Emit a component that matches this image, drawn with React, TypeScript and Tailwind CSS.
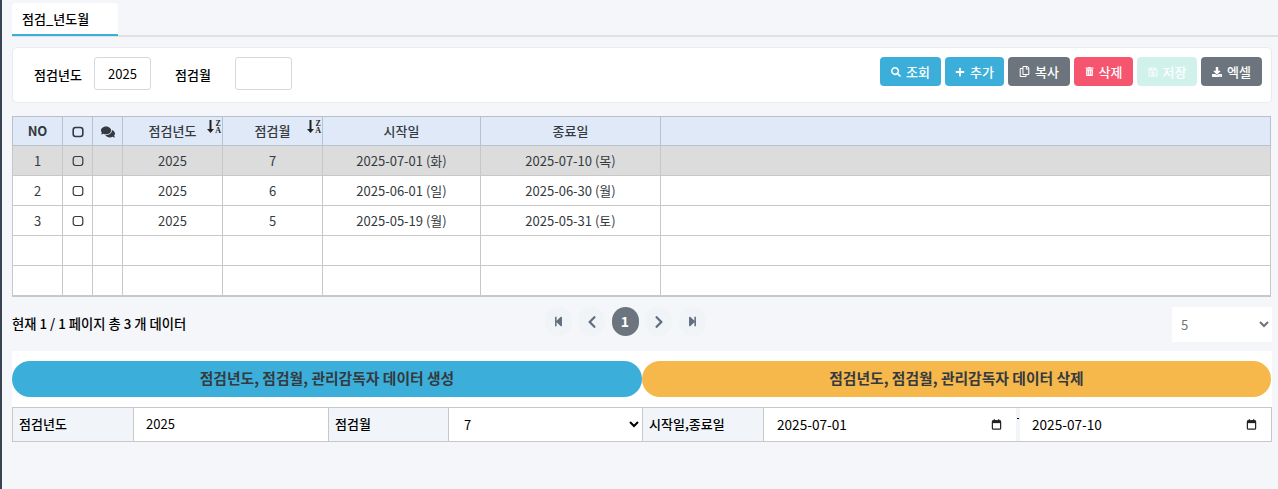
import type { ReactNode } from 'react'
import {
  FaChevronLeft,
  FaChevronRight,
  FaComments,
  FaDownload,
  FaPlus,
  FaRegCopy,
  FaRegSave,
  FaSearch,
  FaStepBackward,
  FaStepForward,
  FaTrashAlt,
} from 'react-icons/fa'

const font = 'font-["Noto_Sans_CJK_KR",_"Noto_Sans",_sans-serif]'

const rows = [
  { no: 1, year: '2025', month: '7', start: '2025-07-01 (화)', end: '2025-07-10 (목)', selected: true },
  { no: 2, year: '2025', month: '6', start: '2025-06-01 (일)', end: '2025-06-30 (월)' },
  { no: 3, year: '2025', month: '5', start: '2025-05-19 (월)', end: '2025-05-31 (토)' },
]

function CheckBox({ thick }: { thick?: boolean }) {
  return (
    <svg viewBox="0 0 12 12" className="inline w-[12px] h-[12px] mb-[2px]" fill="none" stroke="currentColor" strokeWidth={thick ? 1.6 : 1.2}>
      <rect x="1.2" y="1.5" width="9.6" height="9" rx="2.4" />
    </svg>
  )
}

function CalendarIcon() {
  return (
    <svg viewBox="0 0 12 13" className="w-[11px] h-[13px] text-[#222]" fill="none">
      <rect x="1.5" y="2.5" width="9" height="9" rx="1" stroke="currentColor" strokeWidth="1.3" />
      <rect x="1.5" y="2" width="9" height="3" fill="currentColor" />
      <rect x="3" y="0.8" width="1.4" height="2" fill="currentColor" />
      <rect x="7.6" y="0.8" width="1.4" height="2" fill="currentColor" />
    </svg>
  )
}

function SortMark() {
  return (
    <span className="absolute right-[1px] top-[3px] flex items-start gap-[1px] text-[#222]">
      <svg viewBox="0 0 7 13" className="w-[7px] h-[13px]" fill="currentColor">
        <path d="M2.5 0h2v9h2.5L3.5 13 0 9h2.5z" />
      </svg>
      <span className='flex flex-col font-["Liberation_Serif",_serif] text-[8px] leading-[7px] font-bold'>
        <span>Z</span>
        <span>A</span>
      </span>
    </span>
  )
}

function ToolButton({ icon, label, className }: { icon: ReactNode; label: string; className: string }) {
  return (
    <button className={`h-[29px] rounded-[4px] flex items-center justify-center gap-[5px] text-[13px] font-medium text-white ${className}`}>
      <span className="text-[10px]">{icon}</span>
      {label}
    </button>
  )
}

function HeadCell({ children, sort }: { children?: ReactNode; sort?: boolean }) {
  return (
    <th className="relative h-[29px] border border-[#b8c2cc] bg-[#e0e9f7] p-0 text-[13px] font-medium text-[#343a40]">
      {children}
      {sort && <SortMark />}
    </th>
  )
}

function BodyCell({ children }: { children?: ReactNode }) {
  return <td className="h-[30px] border border-[#c8c8c8] p-0 text-center text-[13px] text-[#343a40]">{children}</td>
}

function PageButton({ children, active }: { children: ReactNode; active?: boolean }) {
  return (
    <span
      className={`w-[27px] h-[29px] rounded-full flex items-center justify-center text-[14px] ${
        active ? 'bg-[#6c757d] text-white font-bold' : 'bg-[#f1f4f7] text-[#5f6f80]'
      }`}
    >
      {children}
    </span>
  )
}

function Label({ children, className }: { children: ReactNode; className: string }) {
  return <div className={`bg-[#f1f4f8] flex items-center pl-[6px] text-[13px] font-medium text-black ${className}`}>{children}</div>
}

function DateField({ value, className }: { value: string; className: string }) {
  return (
    <div className={`flex items-center justify-between pr-[14px] text-[13.6px] ${className}`}>
      {value}
      <CalendarIcon />
    </div>
  )
}

export default function App() {
  return (
    <div className={`${font} min-h-[489px] bg-[#f4f6f9] border-l-2 border-[#3a4553] pl-[10px] pr-[6px] pt-[3px] text-black`}>
      {/* Tabs */}
      <div className="mr-[-6px] border-b-2 border-[#dee2e6] h-[34px]">
        <div className="w-[106px] h-[33px] bg-white rounded-t-[4px] border-b-2 border-[#3bafda] pl-[10px] flex items-center text-[13px] font-medium">
          점검_년도월
        </div>
      </div>

      {/* Search */}
      <div className="mt-[10px] h-[56px] bg-white border border-[#e9ecef] rounded-[5px] flex items-start pt-[9px] pl-[21px] pr-[9px]">
        <span className="mt-[8px] w-[60px] text-[13px] font-medium">점검년도</span>
        <input readOnly value="2025" className="w-[57px] h-[33px] border border-[#d5d9de] rounded-[3px] text-center text-[13px] outline-none" />
        <span className="mt-[8px] ml-[24px] w-[60px] text-[13px] font-medium">점검월</span>
        <input readOnly value="" className="w-[57px] h-[33px] border border-[#d5d9de] rounded-[3px] text-center text-[13px] outline-none" />
        <div className="ml-auto flex gap-[4px]">
          <ToolButton icon={<FaSearch />} label="조회" className="w-[61px] bg-[#3bafda]" />
          <ToolButton icon={<FaPlus />} label="추가" className="w-[59px] bg-[#3bafda]" />
          <ToolButton icon={<FaRegCopy className="text-[11px]" />} label="복사" className="w-[62px] bg-[#6c757d]" />
          <ToolButton icon={<FaTrashAlt className="text-[9px]" />} label="삭제" className="w-[59px] bg-[#f5556f]" />
          <ToolButton icon={<FaRegSave />} label="저장" className="w-[60px] bg-[#d1f2eb]" />
          <ToolButton icon={<FaDownload />} label="엑셀" className="w-[61px] bg-[#6c757d]" />
        </div>
      </div>

      {/* Grid */}
      <table className="mt-[13px] w-[1259px] table-fixed border-collapse bg-white border-b-2 border-[#c8c8c8]">
        <colgroup>
          <col className="w-[50px]" />
          <col className="w-[30px]" />
          <col className="w-[30px]" />
          <col className="w-[100px]" />
          <col className="w-[100px]" />
          <col className="w-[158px]" />
          <col className="w-[180px]" />
          <col />
        </colgroup>
        <thead>
          <tr>
            <HeadCell>
              <span className="font-bold">NO</span>
            </HeadCell>
            <HeadCell>
              <CheckBox thick />
            </HeadCell>
            <HeadCell>
              <FaComments className="inline text-[14px] mb-[2px]" />
            </HeadCell>
            <HeadCell sort>점검년도</HeadCell>
            <HeadCell sort>점검월</HeadCell>
            <HeadCell>시작일</HeadCell>
            <HeadCell>종료일</HeadCell>
            <HeadCell />
          </tr>
        </thead>
        <tbody>
          {rows.map((row) => (
            <tr key={row.no} className={row.selected ? 'bg-[#dcdcdc]' : ''}>
              <BodyCell>{row.no}</BodyCell>
              <BodyCell>
                <CheckBox />
              </BodyCell>
              <BodyCell />
              <BodyCell>{row.year}</BodyCell>
              <BodyCell>{row.month}</BodyCell>
              <BodyCell>{row.start}</BodyCell>
              <BodyCell>{row.end}</BodyCell>
              <BodyCell />
            </tr>
          ))}
          {[4, 5].map((n) => (
            <tr key={n}>
              {[0, 1, 2, 3, 4, 5, 6, 7].map((c) => (
                <BodyCell key={c} />
              ))}
            </tr>
          ))}
        </tbody>
      </table>

      {/* Pager */}
      <div className="mt-[10px] h-[35px] grid grid-cols-[1fr_auto_1fr] items-center">
        <span className="text-[13.3px] font-medium mt-[-1px]">현재 1 / 1 페이지 총 3 개 데이터</span>
        <div className="flex items-center gap-[6.5px] mr-[34px] mt-[-5px]">
          <PageButton>
            <FaStepBackward className="text-[11px]" />
          </PageButton>
          <PageButton>
            <FaChevronLeft />
          </PageButton>
          <PageButton active>1</PageButton>
          <PageButton>
            <FaChevronRight />
          </PageButton>
          <PageButton>
            <FaStepForward className="text-[11px]" />
          </PageButton>
        </div>
        <select className="justify-self-end w-[100px] h-[35px] bg-white pl-[5px] text-[13px] text-[#6c757d] outline-none">
          <option>5</option>
        </select>
      </div>

      {/* Generate / delete */}
      <div className="mt-[9px] w-[1260px] bg-white pt-[10px] pb-[10px] flex">
        <button className="h-[36px] w-[630px] rounded-full bg-[#3bafda] text-[14.8px] font-semibold text-[#343a40]">
          점검년도, 점검월, 관리감독자 데이터 생성
        </button>
        <button className="h-[36px] w-[629px] rounded-full bg-[#f6b84b] text-[14.8px] font-semibold text-[#343a40]">
          점검년도, 점검월, 관리감독자 데이터 삭제
        </button>
      </div>

      {/* Detail form */}
      <div className="w-[1260px] h-[35px] bg-white border border-[#c8c8c8] flex">
        <Label className="w-[121px] border-r border-[#c8c8c8]">점검년도</Label>
        <input readOnly value="2025" className="w-[194px] pl-[12px] text-[13px] outline-none" />
        <Label className="w-[121px] border-x border-[#c8c8c8]">점검월</Label>
        <select className="w-[193px] pl-[11px] text-[13px] outline-none bg-white">
          <option>7</option>
        </select>
        <Label className="w-[122px] border-x border-[#c8c8c8]">시작일,종료일</Label>
        <DateField value="2025-07-01" className="w-[252px] pl-[13px]" />
        {/* clipped separator between the two dates */}
        <div className="w-[4px] bg-[#f1f4f8] pt-[10px] pl-[1px]">
          <div className="w-[2px] h-[1px] bg-black" />
        </div>
        <DateField value="2025-07-10" className="flex-1 min-w-0 pl-[12px]" />
      </div>
    </div>
  )
}
